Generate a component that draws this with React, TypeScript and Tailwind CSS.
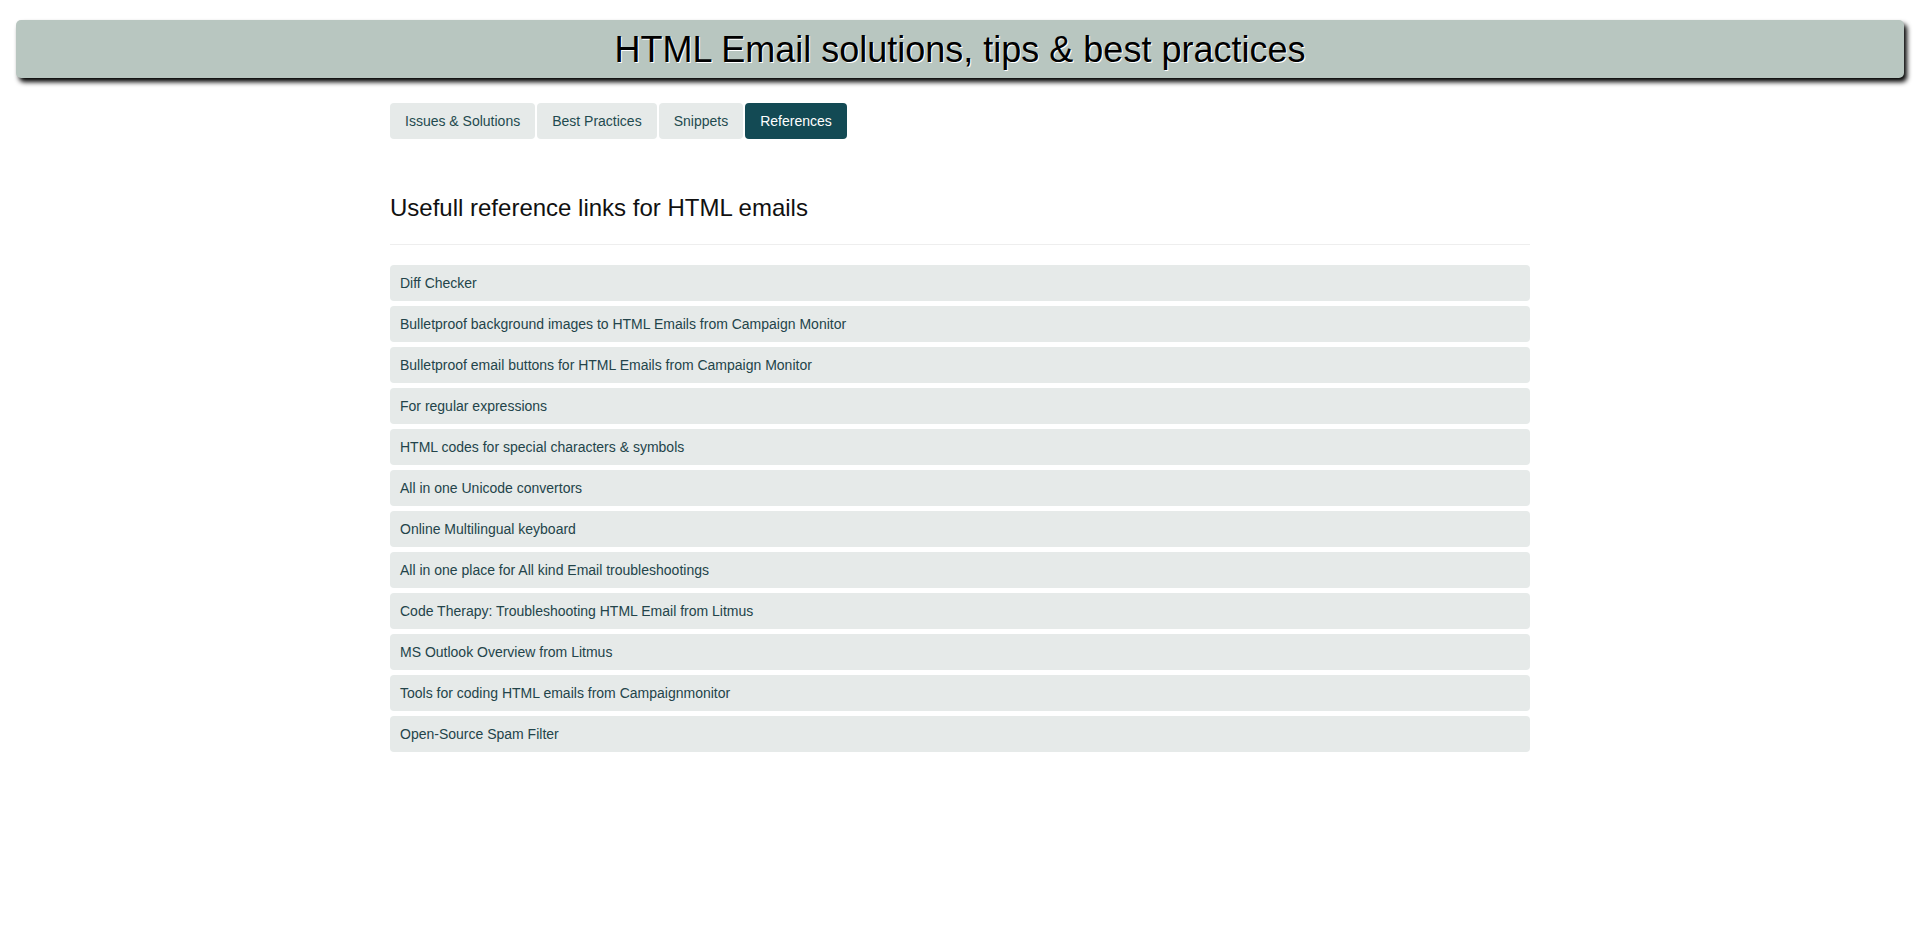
const tabs = ["Issues & Solutions", "Best Practices", "Snippets", "References"];

const links = [
  "Diff Checker",
  "Bulletproof background images to HTML Emails from Campaign Monitor",
  "Bulletproof email buttons for HTML Emails from Campaign Monitor",
  "For regular expressions",
  "HTML codes for special characters & symbols",
  "All in one Unicode convertors",
  "Online Multilingual keyboard",
  "All in one place for All kind Email troubleshootings",
  "Code Therapy: Troubleshooting HTML Email from Litmus",
  "MS Outlook Overview from Litmus",
  "Tools for coding HTML emails from Campaignmonitor",
  "Open-Source Spam Filter",
];

export default function App() {
  return (
    <div className="min-h-screen bg-white font-['Liberation_Sans',Arial,sans-serif] text-[#333]">
      <header className="mx-4 mt-5 flex h-[58px] items-center justify-center rounded-[5px] bg-[#b8c6c0] shadow-[3px_4px_5px_#000]">
        <h1 className="pt-[2px] text-[36px] leading-none text-black [text-shadow:1px_1px_0_#fff]">
          HTML Email solutions, tips &amp; best practices
        </h1>
      </header>

      <main className="mx-auto w-[1140px]">
        <ul className="mt-[25px] flex gap-[2px]">
          {tabs.map((t) => (
            <li key={t}>
              <a
                href="#"
                className={
                  t === "References"
                    ? "block rounded-[4px] bg-[#134a54] px-[15px] py-2 text-sm leading-5 text-white"
                    : "block rounded-[4px] bg-[#e6eae9] px-[15px] py-2 text-sm leading-5 text-[#1f4a4f]"
                }
              >
                {t}
              </a>
            </li>
          ))}
        </ul>

        <h3 className="mt-[56px] text-[24px] leading-[26px] text-[#111]">
          Usefull reference links for HTML emails
        </h3>
        <hr className="mt-[23px] border-t border-[#eee]" />

        <div className="mt-5 flex flex-col gap-[5px]">
          {links.map((l) => (
            <a
              key={l}
              href="#"
              className="block rounded-[4px] bg-[#e6eae9] px-[10px] py-2 text-sm leading-5 text-[#23444a]"
            >
              {l}
            </a>
          ))}
        </div>
      </main>
    </div>
  );
}
